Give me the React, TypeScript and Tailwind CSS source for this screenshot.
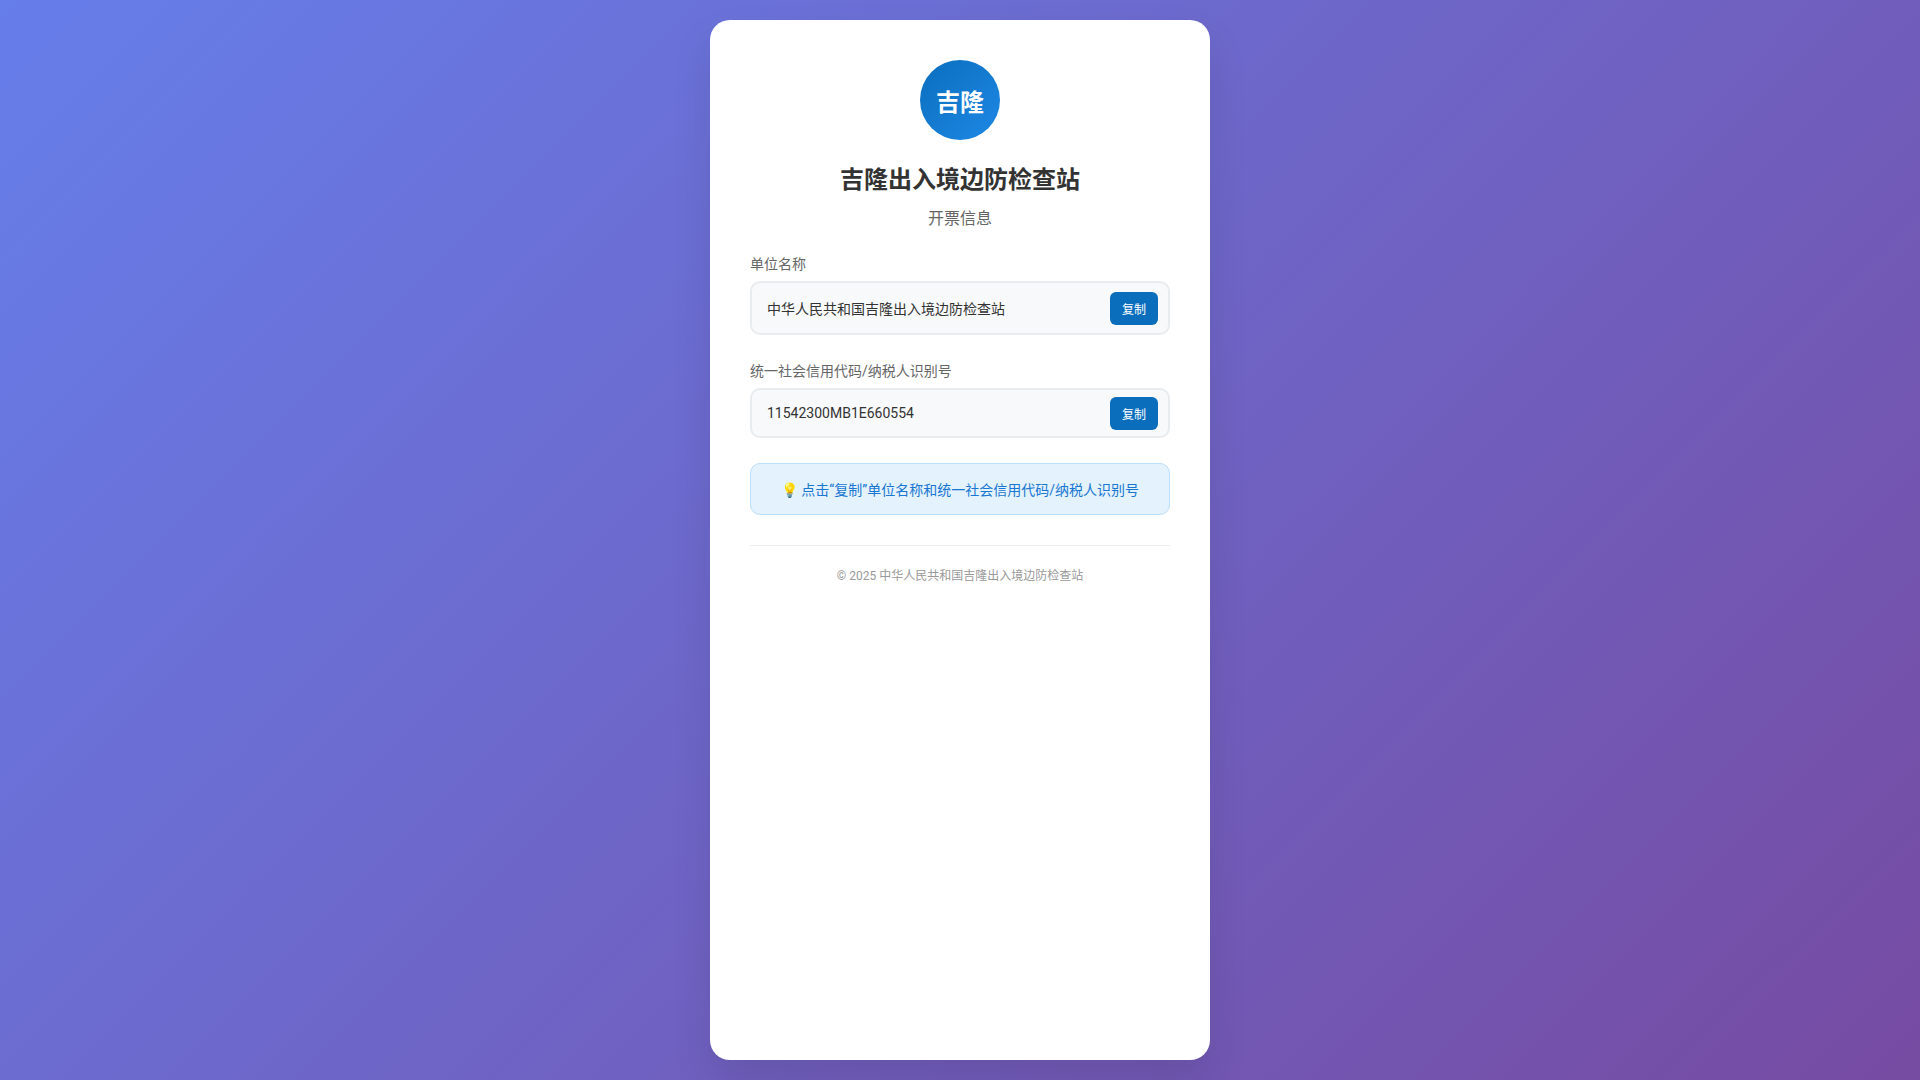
import { useState } from "react";

type InfoFieldProps = {
  label: string;
  value: string;
};

function InfoField({ label, value }: InfoFieldProps) {
  const [copied, setCopied] = useState(false);

  async function copyValue() {
    try {
      await navigator.clipboard.writeText(value);
      setCopied(true);
      setTimeout(() => setCopied(false), 2000);
    } catch {
      setCopied(false);
    }
  }

  return (
    <div className="mb-[25px]">
      <dt className="mb-2 text-sm leading-[normal] text-[#666666]">{label}</dt>
      <dd className="flex items-center justify-between gap-3 rounded-[10px] border-2 border-[#e9ecef] bg-[#f8f9fb] pr-[10px] pl-[15px]">
        <span className="min-w-0 py-[15px] text-sm leading-[normal] break-all text-[#333333]">{value}</span>
        <button
          className="shrink-0 cursor-pointer rounded-[6px] bg-[#0a6ebd] px-3 py-2 text-xs leading-[normal] text-white transition hover:bg-[#085a9c]"
          onClick={copyValue}
          type="button"
        >
          {copied ? "已复制" : "复制"}
        </button>
      </dd>
    </div>
  );
}

export default function App() {
  return (
    <div className="flex min-h-screen justify-center bg-linear-[135deg,#667eea_0%,#764ba2_100%] p-5 font-['Roboto','Noto_Sans_CJK_SC',sans-serif]" lang="zh-CN">
      <main className="w-full max-w-[500px] rounded-[20px] bg-white p-10 shadow-[0_20px_40px_rgba(0,0,0,0.1)]">
        <header className="mb-6 text-center">
          <div className="mx-auto mb-5 flex size-20 items-center justify-center rounded-full bg-linear-[135deg,#0a6ebd,#1e88e5] text-2xl leading-[normal] font-bold text-white">
            吉隆
          </div>
          <h1 className="mb-[10px] text-2xl leading-[normal] font-bold text-[#333333]">吉隆出入境边防检查站</h1>
          <p className="text-base leading-[normal] text-[#666666]">开票信息</p>
        </header>

        <dl>
          <InfoField label="单位名称" value="中华人民共和国吉隆出入境边防检查站" />
          <InfoField label="统一社会信用代码/纳税人识别号" value="11542300MB1E660554" />
        </dl>

        <p className="rounded-[10px] border border-[#bbdefb] bg-[#e3f2fd] p-[15px] text-center text-sm leading-[normal] text-[#1976d2]">
          💡 点击“复制”单位名称和统一社会信用代码/纳税人识别号
        </p>

        <footer className="mt-[30px] border-t border-[#eeeeee] pt-5 text-center text-xs leading-[normal] text-[#999999]">
          © 2025 中华人民共和国吉隆出入境边防检查站
        </footer>
      </main>
    </div>
  );
}
